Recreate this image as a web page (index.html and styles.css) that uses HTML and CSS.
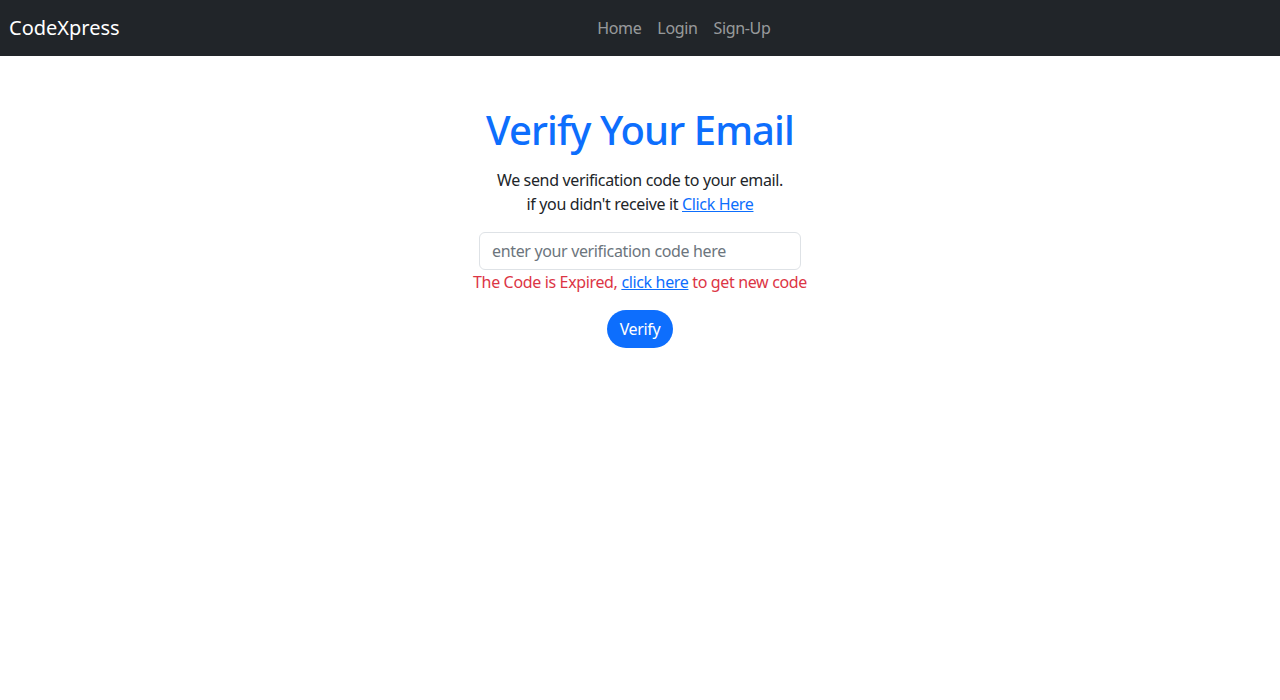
FILE: index.html
```html
<!DOCTYPE html>
<html lang="en">
<head>
    <meta charset="UTF-8">
    <meta name="viewport" content="width=device-width, initial-scale=1.0">
    <title>CodeXpress - Verify Email</title>
    <link rel="stylesheet" href="styles.css">
</head>
<body>
    <nav class="navbar">
        <a class="brand" href="#">CodeXpress</a>
        <ul class="nav-links">
            <li><a href="#">Home</a></li>
            <li><a href="#">Login</a></li>
            <li><a href="#">Sign-Up</a></li>
        </ul>
    </nav>

    <div class="container">
        <h1>Verify Your Email</h1>
        <p class="info">
            We send verification code to your email.<br>
            if you didn't receive it <a href="#">Click Here</a>
        </p>
        <form class="verify-form">
            <input type="text" placeholder="enter your verification code here">
            <p class="error">The Code is Expired, <a href="#">click here</a> to get new code</p>
            <button type="submit">Verify</button>
        </form>
    </div>
</body>
</html>
```

FILE: styles.css
```css
* {
    margin: 0;
    padding: 0;
    box-sizing: border-box;
}

body {
    font-family: "Noto Sans", "Open Sans", sans-serif;
    font-size: 16px;
    line-height: 1.5;
    letter-spacing: -0.35px;
    color: #212529;
    background: #fff;
}

a {
    color: #0d6efd;
}

/* Navigation */
.navbar {
    display: flex;
    align-items: center;
    height: 56px;
    padding: 0 48px 0 9px;
    background: #212529;
}

.brand {
    margin-right: 16px;
    font-size: 20px;
    letter-spacing: 0;
    color: #fff;
    text-decoration: none;
}

.nav-links {
    display: flex;
    flex: 1;
    justify-content: center;
    list-style: none;
}

.nav-links a {
    display: block;
    padding: 8px;
    color: rgba(255, 255, 255, 0.55);
    text-decoration: none;
}

/* Main Content */
.container {
    display: flex;
    flex-direction: column;
    align-items: center;
    text-align: center;
    padding-top: 50px;
}

h1 {
    font-size: 40px;
    font-weight: 500;
    line-height: 1.2;
    letter-spacing: -0.9px;
    color: #0d6efd;
    margin-bottom: 14px;
}

.info {
    margin-bottom: 16px;
}

.verify-form {
    display: flex;
    flex-direction: column;
    align-items: center;
}

.verify-form input {
    width: 322px;
    height: 38px;
    padding: 6px 12px;
    font-family: inherit;
    font-size: 16px;
    letter-spacing: -0.35px;
    color: #212529;
    border: 1px solid #dee2e6;
    border-radius: 6px;
    outline: none;
}

.verify-form input::placeholder {
    color: #6c757d;
}

.error {
    color: #dc3545;
}

button {
    margin-top: 16px;
    height: 38px;
    padding: 6px 13px;
    font-family: inherit;
    font-size: 16px;
    letter-spacing: -0.35px;
    color: #fff;
    background: #0d6efd;
    border: none;
    border-radius: 50px;
    cursor: pointer;
}
```
